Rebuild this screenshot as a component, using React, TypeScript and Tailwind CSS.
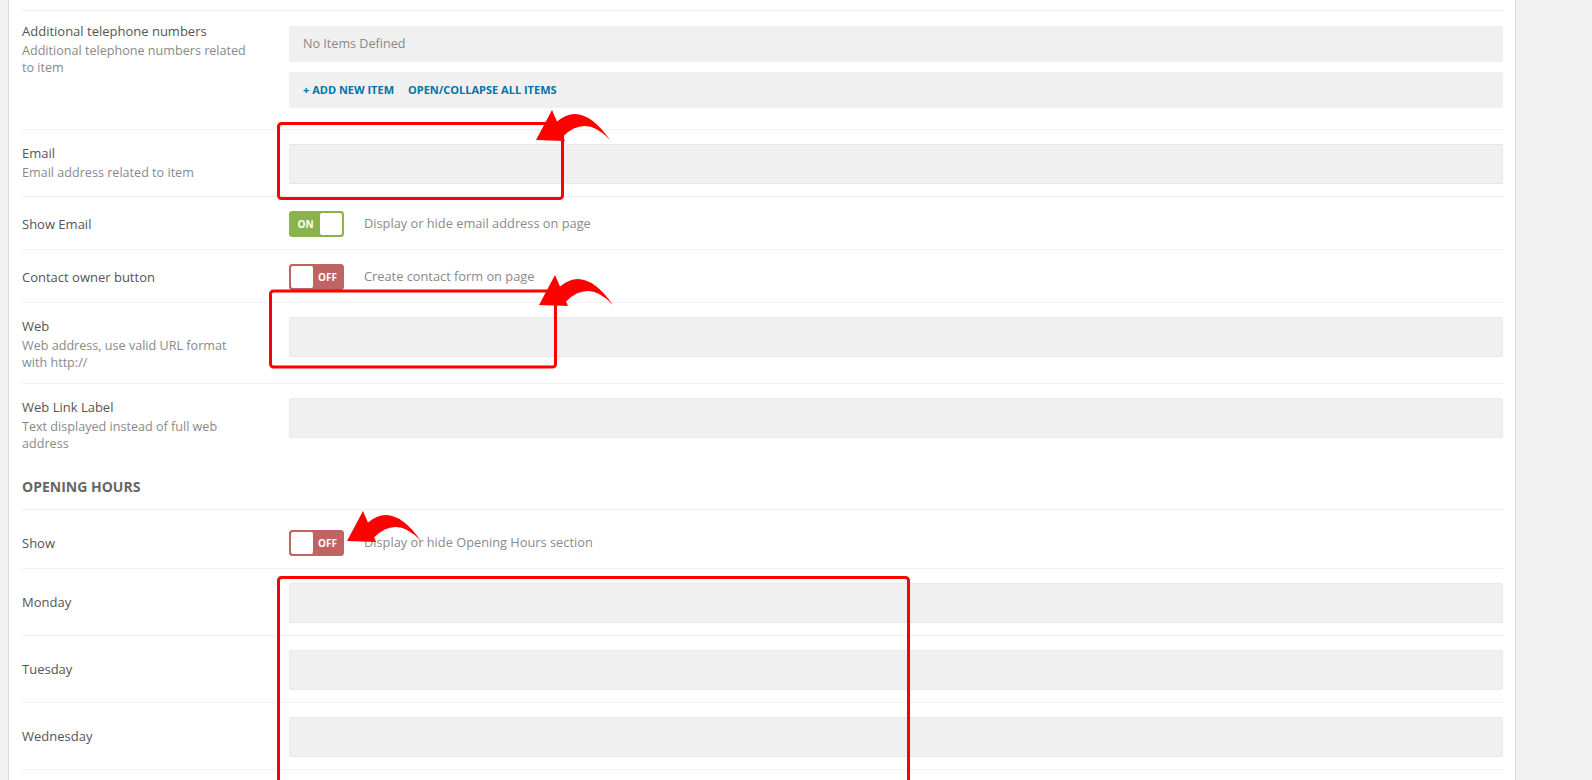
import React from "react";

const days = ["Monday", "Tuesday", "Wednesday"];

// curved pointer, tip at the origin
const arrowPath = "M0 0 L16 -30 L21 -18.5 Q46 -40 74 0 Q50 -26 27 -3.6 L29 1 Z";

const Label = ({ title, desc }: { title: string; desc?: string }) => (
  <div className="w-[267px] shrink-0 pr-[39px]">
    <div className="text-[13px] font-medium leading-[18px] text-[#555]">{title}</div>
    {desc && <div className="mt-[2px] text-[12.6px] leading-[17px] text-[#8a8a8a]">{desc}</div>}
  </div>
);

const TextField = () => (
  <div className="h-[40px] rounded-[2px] border border-[#e8e8e8] bg-[#f0f0f0]" />
);

const Toggle = ({ on }: { on: boolean }) => (
  <div
    className={
      on
        ? "flex h-[26px] w-[55px] shrink-0 items-center rounded-[3px] border border-[#8ab34e] bg-[#8ab34e] p-[1px]"
        : "flex h-[26px] w-[55px] shrink-0 items-center rounded-[3px] border border-[#bf6462] bg-[#bf6462] p-[1px]"
    }
  >
    {on ? (
      <>
        <span className="flex-1 text-center text-[10px] font-bold text-white">ON</span>
        <span className="h-[22px] w-[22px] rounded-[2px] bg-white" />
      </>
    ) : (
      <>
        <span className="h-[22px] w-[22px] rounded-[2px] bg-white" />
        <span className="flex-1 text-center text-[10px] font-bold text-white">OFF</span>
      </>
    )}
  </div>
);

const InputRow = ({ title, desc, center }: { title: string; desc?: string; center?: boolean }) => (
  <div
    className={`flex border-b border-[#efefef] pt-[14px] pb-[12px] ${center ? "items-center" : "items-start"}`}
  >
    <div className={center ? "pb-[3px]" : ""}>
      <Label title={title} desc={desc} />
    </div>
    <div className="flex-1">
      <TextField />
    </div>
  </div>
);

const ToggleRow = ({ title, on, desc, top = "pt-[14px]" }: { title: string; on: boolean; desc: string; top?: string }) => (
  <div className={`flex items-center border-b border-[#efefef] pb-[12px] ${top}`}>
    <div className="w-[267px] shrink-0 text-[13px] font-medium leading-[18px] text-[#555]">{title}</div>
    <Toggle on={on} />
    <span className="ml-[20px] text-[12.8px] text-[#8a8a8a]">{desc}</span>
  </div>
);

export default function App() {
  return (
    <div className="relative h-screen overflow-hidden bg-[#f1f1f1] pl-[8px] font-['Open_Sans',sans-serif]">
      <div className="h-full w-[1508px] border-x border-[#dcdcdc] bg-white pl-[13px] pr-[12px]">
        <div className="h-[11px] border-b border-[#efefef]" />

        {/* repeater field */}
        <div className="flex items-start border-b border-[#efefef] pt-[11px] pb-[21px]">
          <Label
            title="Additional telephone numbers"
            desc="Additional telephone numbers related to item"
          />
          <div className="flex flex-1 flex-col gap-[10px] pt-[4px]">
            <div className="flex h-[36px] items-center rounded-[2px] bg-[#f0f0f0] px-[14px] pt-[1px] text-[12.6px] text-[#888]">
              No Items Defined
            </div>
            <div className="flex h-[36px] items-center gap-[14px] rounded-[2px] bg-[#f0f0f0] px-[14px] pt-[1px] text-[11px] font-bold text-[#0073aa]">
              <span>+ ADD NEW ITEM</span>
              <span>OPEN/COLLAPSE ALL ITEMS</span>
            </div>
          </div>
        </div>

        <InputRow title="Email" desc="Email address related to item" />
        <ToggleRow title="Show Email" on desc="Display or hide email address on page" />
        <ToggleRow title="Contact owner button" on={false} desc="Create contact form on page" />
        <InputRow title="Web" desc="Web address, use valid URL format with http://" />

        <div className="flex items-start pt-[14px] pb-[12px]">
          <Label title="Web Link Label" desc="Text displayed instead of full web address" />
          <div className="flex-1">
            <TextField />
          </div>
        </div>

        <div className="border-b border-[#efefef] pt-[14px] pb-[13px] text-[14px] font-bold leading-[18px] text-[#666]">
          OPENING HOURS
        </div>

        <ToggleRow title="Show" on={false} desc="Display or hide Opening Hours section" top="pt-[20px]" />

        {days.map((d) => (
          <InputRow key={d} title={d} center />
        ))}
      </div>

      {/* annotation layer */}
      <svg className="pointer-events-none absolute inset-0" width="1592" height="780">
        <g fill="none" stroke="#ff0000" strokeWidth="3">
          <rect x="278.5" y="123.5" width="284" height="75" rx="3" />
          <rect x="270.5" y="291" width="285" height="76" rx="3" />
          <rect x="278.5" y="577.5" width="630" height="300" rx="3" />
        </g>
        <g fill="#ff0000">
          <path transform="translate(536 140)" d={arrowPath} />
          <path transform="translate(539 305)" d={arrowPath} />
          <path transform="translate(347 541)" d={arrowPath} />
        </g>
      </svg>
    </div>
  );
}
